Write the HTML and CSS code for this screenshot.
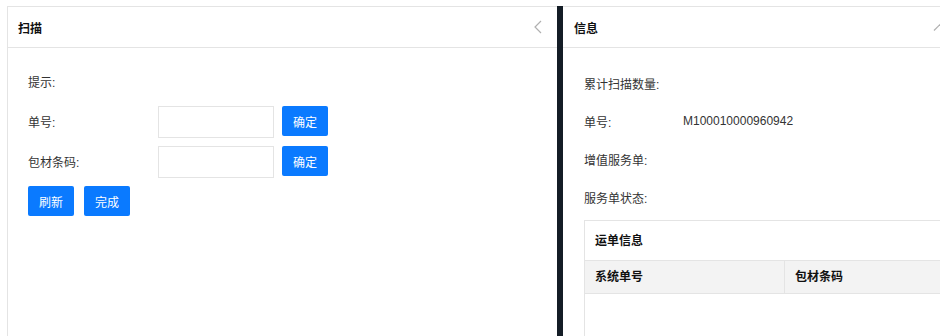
FILE: index.html
```html
<!DOCTYPE html>
<html lang="zh">
<head>
<meta charset="utf-8">
<title>扫描</title>
<link rel="stylesheet" href="styles.css">
</head>
<body>
<div class="page">
  <section class="panel panel-left">
    <header class="panel-head">
      <span class="panel-title">扫描</span>
      <svg class="head-icon" width="10" height="14" viewBox="0 0 10 14"><path d="M8 1 L2 7 L8 13" fill="none" stroke="#b0b0b0" stroke-width="1.2"/></svg>
    </header>
    <div class="panel-body form">
      <div class="form-row"><span class="label">提示:</span></div>
      <div class="form-row"><span class="label">单号:</span><input class="input" type="text"><button class="btn">确定</button></div>
      <div class="form-row"><span class="label">包材条码:</span><input class="input" type="text"><button class="btn">确定</button></div>
      <div class="btn-row"><button class="btn">刷新</button><button class="btn">完成</button></div>
    </div>
  </section>
  <div class="splitter"></div>
  <section class="panel panel-right">
    <header class="panel-head">
      <span class="panel-title">信息</span>
      <svg class="head-icon-right" width="8" height="10" viewBox="0 0 8 10"><path d="M1 8.5 L7.5 2" fill="none" stroke="#b0b0b0" stroke-width="1.2"/></svg>
    </header>
    <div class="panel-body info">
      <div class="info-row"><span class="info-label">累计扫描数量:</span></div>
      <div class="info-row"><span class="info-label">单号:</span><span class="info-value">M100010000960942</span></div>
      <div class="info-row"><span class="info-label">增值服务单:</span></div>
      <div class="info-row"><span class="info-label">服务单状态:</span></div>
      <div class="table-box">
        <div class="table-title">运单信息</div>
        <div class="table-head">
          <div class="th th-first">系统单号</div>
          <div class="th">包材条码</div>
        </div>
        <div class="table-body"></div>
      </div>
    </div>
  </section>
</div>
</body>
</html>
```
FILE: styles.css
```css
* { box-sizing: border-box; }
html, body { margin: 0; padding: 0; background: #fff; overflow: hidden; }
body {
  width: 940px;
  height: 336px;
  font-family: "Liberation Sans", "Noto Sans CJK SC", sans-serif;
  font-size: 12px;
  color: #333;
}
.page {
  display: flex;
  padding: 6px 0 0 7px;
  height: 336px;
}
.panel {
  border-top: 1px solid #e4e4e4;
  height: 330px;
  display: flex;
  flex-direction: column;
}
.panel-left {
  width: 550px;
  flex: 0 0 550px;
  border-left: 1px solid #e4e4e4;
}
.splitter {
  width: 6px;
  flex: 0 0 6px;
  background: #141d26;
  height: 330px;
}
.panel-right {
  flex: 0 0 400px;
  width: 400px;
  position: relative;
}
.panel-head {
  height: 41px;
  border-bottom: 1px solid #e4e4e4;
  display: flex;
  align-items: center;
  justify-content: space-between;
  padding: 0 14px 0 10px;
  flex: 0 0 41px;
}
.panel-right .panel-head { padding-left: 11px; }
.panel-title {
  font-weight: bold;
  color: #111;
  font-size: 12px;
}
.head-icon { display: block; }
.head-icon-right {
  position: absolute;
  left: 370px;
  top: 15px;
}
.form {
  padding: 18px 0 0 20px;
  display: flex;
  flex-direction: column;
  gap: 8px;
}
.form-row {
  display: flex;
  align-items: flex-start;
  height: 32px;
}
.label {
  width: 130px;
  line-height: 32px;
  padding-top: 1px;
}
.input {
  width: 116px;
  height: 32px;
  border: 1px solid #e4e4e4;
  border-radius: 0;
  margin: 0 8px 0 0;
  padding: 0 6px;
  font: inherit;
  outline: none;
}
.btn {
  height: 30px;
  width: 46px;
  border: none;
  border-radius: 2px;
  background: #0a7aff;
  color: #fff;
  font-family: "Liberation Sans", "Noto Sans CJK SC", sans-serif;
  font-size: 12px;
  padding: 0;
  cursor: pointer;
}
.btn-row {
  display: flex;
  gap: 10px;
}
.info {
  padding: 16px 0 0 21px;
  display: flex;
  flex-direction: column;
  flex: 1;
  min-height: 0;
}
.info-row {
  display: flex;
  height: 38px;
  align-items: center;
  flex: 0 0 38px;
}
.info-label { width: 99px; }
.info-value { color: #333; }
.table-box {
  margin-top: 4px;
  border: 1px solid #e4e4e4;
  border-bottom: none;
  width: 400px;
  flex: 1;
}
.table-title {
  height: 40px;
  line-height: 40px;
  padding-left: 10px;
  font-weight: bold;
  color: #111;
  border-bottom: 1px solid #e4e4e4;
}
.table-head {
  display: flex;
  background: #f3f3f3;
  border-bottom: 1px solid #e4e4e4;
  height: 33px;
}
.th {
  line-height: 32px;
  padding-left: 10px;
  font-weight: bold;
  color: #111;
  flex: 1;
}
.th-first {
  flex: 0 0 200px;
  border-right: 1px solid #e4e4e4;
}
```
